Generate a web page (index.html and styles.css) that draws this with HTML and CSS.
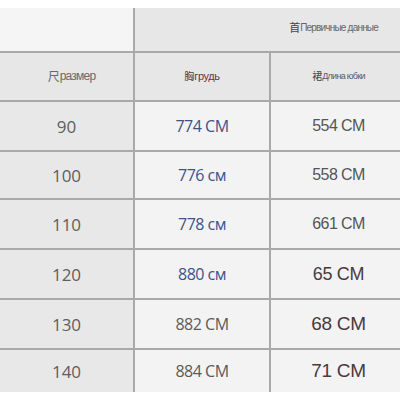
FILE: index.html
```html
<!DOCTYPE html>
<html>
<head>
<meta charset="utf-8">
<link rel="stylesheet" href="styles.css">
</head>
<body>
<div class="table">
  <div class="cell top-left"></div>
  <div class="cell top-right"><span class="cjk cjk-top">首</span><span class="hdr-top">Первичные данные</span></div>

  <div class="cell head head-size"><span class="cjk cjk-size">尺</span><span class="hdr-size">размер</span></div>
  <div class="cell head"><span class="cjk cjk-chest">胸</span><span class="hdr-chest">грудь</span></div>
  <div class="cell head head-len"><span class="cjk cjk-len">裙</span><span class="hdr-len">Длина юбки</span></div>

  <div class="cell size">90</div>
  <div class="cell val blue">774 CM</div>
  <div class="cell val gray">554 CM</div>

  <div class="cell size">100</div>
  <div class="cell val blue">776 см</div>
  <div class="cell val gray">558 CM</div>

  <div class="cell size">110</div>
  <div class="cell val blue">778 см</div>
  <div class="cell val gray">661 CM</div>

  <div class="cell size">120</div>
  <div class="cell val blue">880 см</div>
  <div class="cell val dark big1">65 CM</div>

  <div class="cell size">130</div>
  <div class="cell val gray2">882 CM</div>
  <div class="cell val dark big2">68 CM</div>

  <div class="cell size">140</div>
  <div class="cell val gray2">884 CM</div>
  <div class="cell val dark big2">71 CM</div>
</div>
</body>
</html>
```

FILE: styles.css
```css
html, body {
  margin: 0;
  padding: 0;
  background: #ffffff;
  overflow: hidden;
}
body {
  padding-top: 8px;
  width: 400px;
  height: 400px;
  box-sizing: border-box;
}
.table {
  display: grid;
  grid-template-columns: 133px 134px 129px;
  grid-template-rows: 43px 47px 48px 46px 48px 48px 48px 42px;
  gap: 2px;
  background: #a9a9a9;
  width: 400px;
}
.cell {
  display: flex;
  align-items: center;
  justify-content: center;
  background: #f3f3f3;
  font-family: "Liberation Sans", Arial, sans-serif;
}
.top-left { background: #f5f5f5; }
.top-right {
  grid-column: 2 / 4;
  background: #e7e7e7;
  justify-content: flex-end;
  padding-right: 22px;
  padding-bottom: 4px;
}
.head { background: #e7e7e7; padding-bottom: 2px; }
.head-size { padding-left: 10px; }
.head-len { padding-left: 6px; }
.size {
  background: #e8e8e8;
  font-family: "Open Sans", sans-serif;
  font-size: 17px;
  color: #5e5e5e;
}
.val {
  font-size: 16px;
  letter-spacing: -0.3px;
}
.blue { color: #3d528a; font-family: "Open Sans", sans-serif; font-size: 16px; letter-spacing: -0.5px; }
.gray { color: #555555; font-size: 16px; letter-spacing: -0.6px; padding-left: 6px; }
.gray2 { color: #5a5a5a; font-family: "Open Sans", sans-serif; font-size: 16px; letter-spacing: -0.5px; }
.dark { color: #4a3a3e; padding-left: 6px; }
.big1 { font-size: 18px; }
.big2 { font-size: 19px; }
.cjk {
  font-family: "Noto Sans CJK SC", sans-serif;
  color: #555;
  line-height: 1;
}
.cjk-top { font-size: 11px; color: #444; }
.hdr-top {
  font-size: 10px;
  color: #666;
  letter-spacing: -0.8px;
}
.cjk-size { font-size: 12px; color: #6a6a6a; }
.hdr-size {
  font-size: 12px;
  color: #6a6a6a;
  letter-spacing: -0.8px;
}
.cjk-chest { font-size: 10px; color: #5a3a40; }
.hdr-chest {
  font-size: 11px;
  color: #6b3447;
  letter-spacing: -0.4px;
}
.cjk-len { font-size: 10px; color: #444; }
.hdr-len {
  font-size: 9px;
  color: #5a5a6a;
  letter-spacing: -0.7px;
}
```
